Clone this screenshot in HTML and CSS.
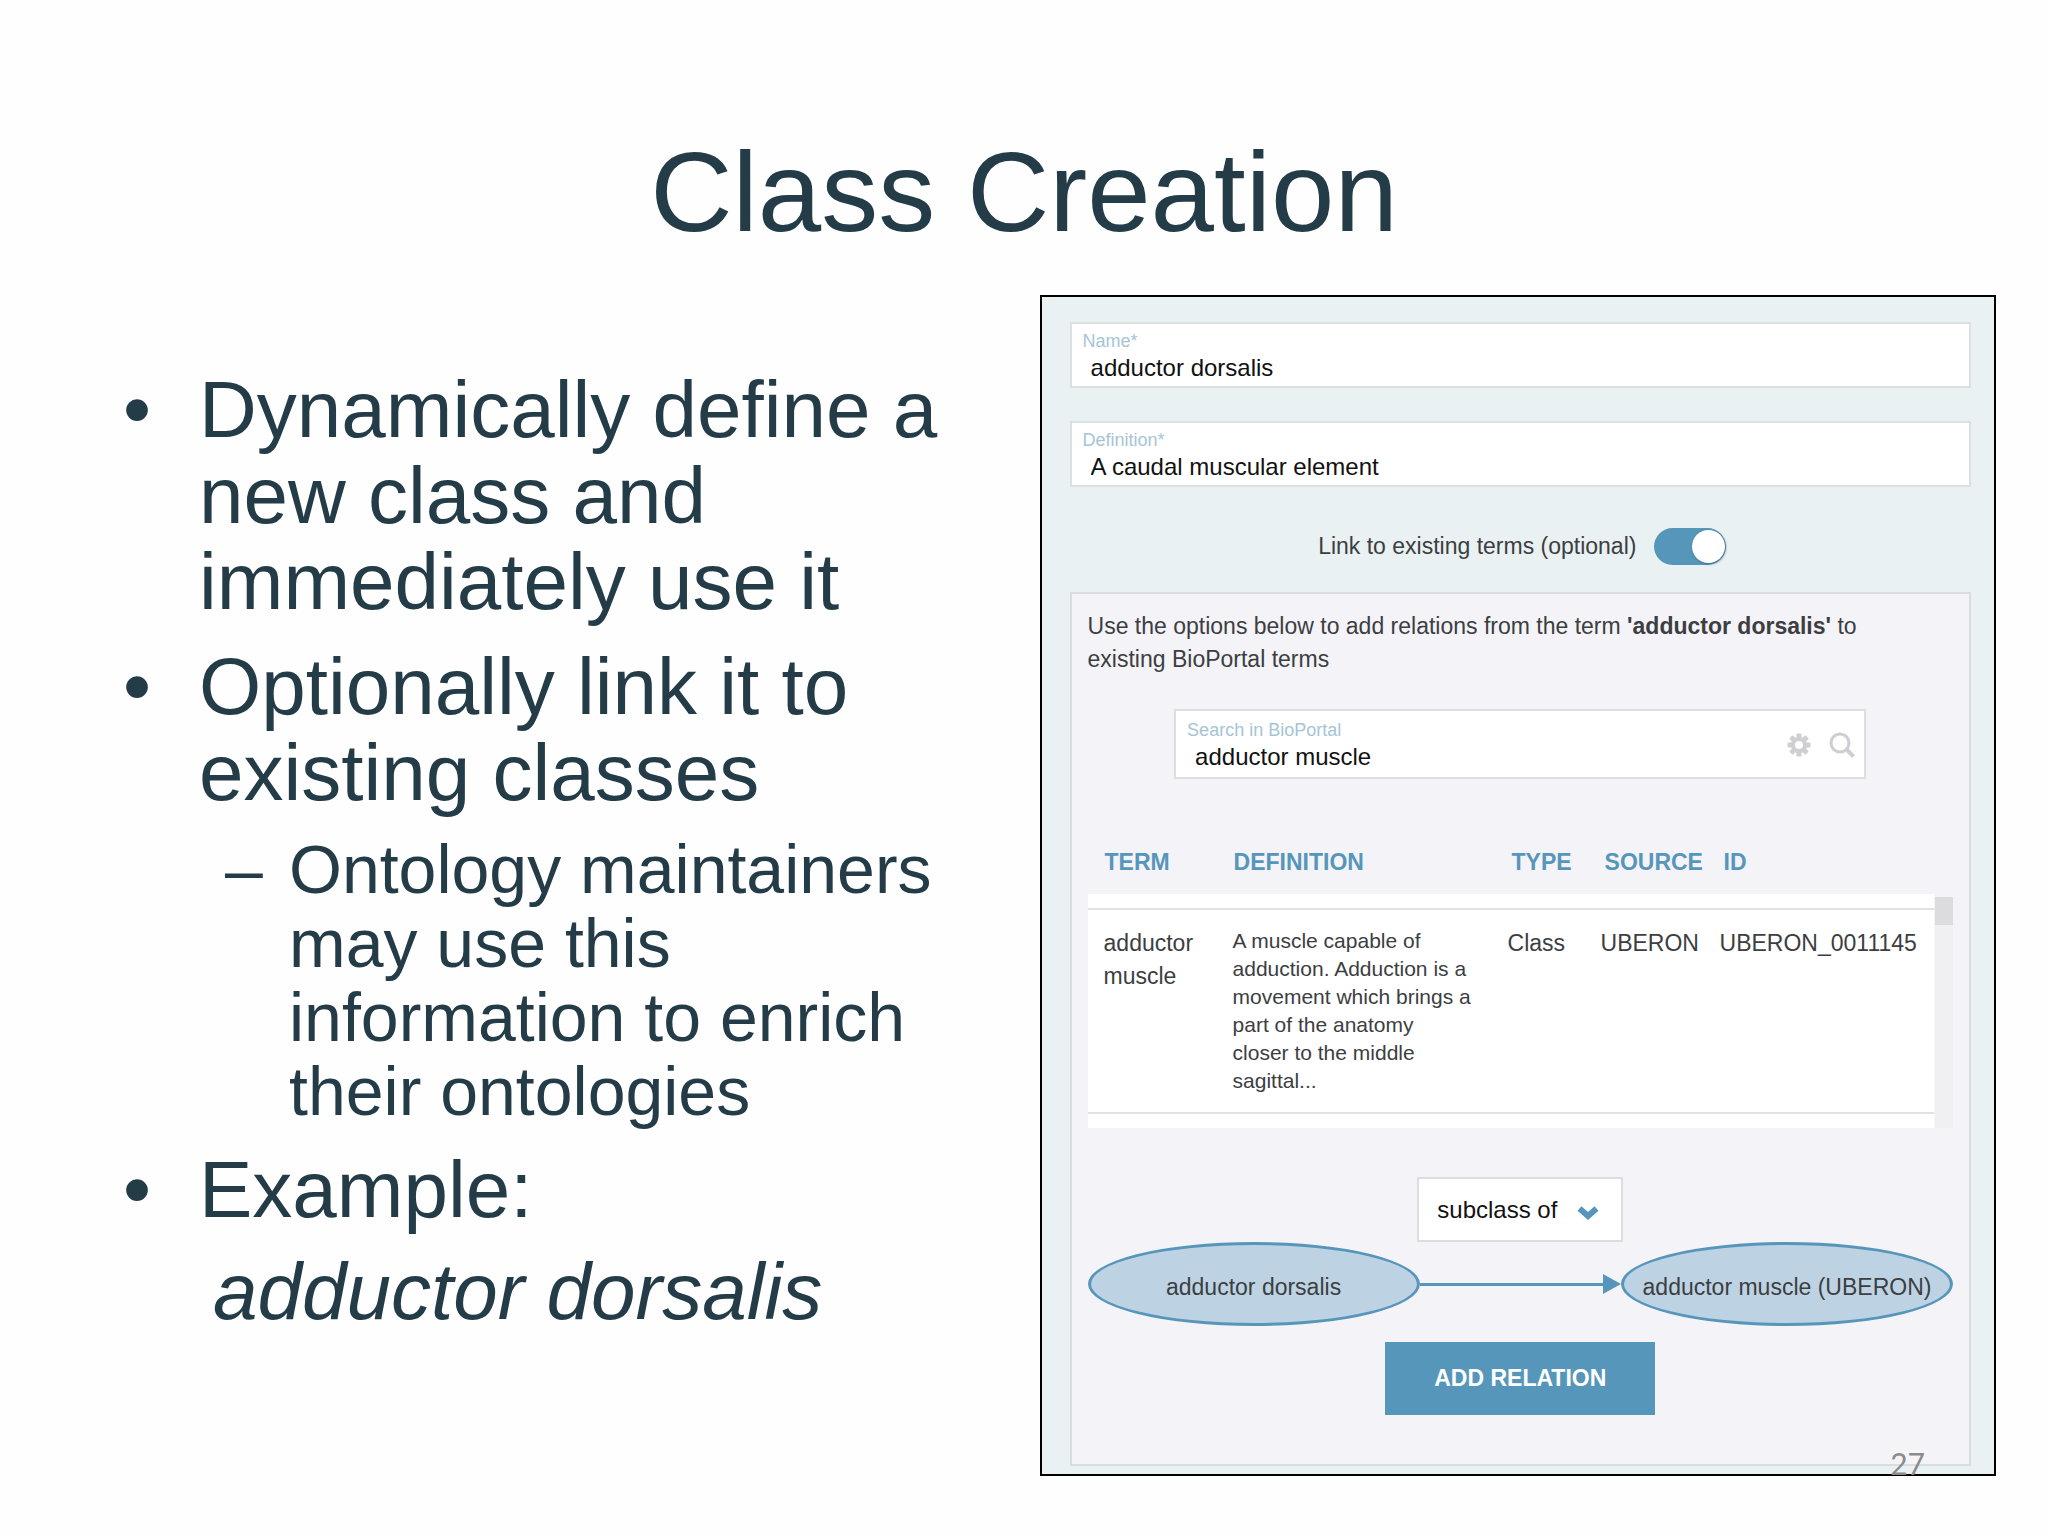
FILE: index.html
```
<!DOCTYPE html>
<html lang="en">
<head>
    <meta charset="UTF-8">
    <meta name="viewport" content="width=device-width, initial-scale=1.0">
    <title>Class Creation</title>
    <link rel="stylesheet" href="styles.css">
</head>
<body>
    <main class="slide">
        <h1>Class Creation</h1>

        <div class="columns">
            <!-- Bullet points -->
            <section class="points">
                <ul class="bullets">
                    <li>Dynamically define a new class and immediately use it</li>
                    <li>Optionally link it to existing classes
                        <ul class="dashes">
                            <li>Ontology maintainers may use this information to enrich their ontologies</li>
                        </ul>
                    </li>
                    <li>Example:</li>
                </ul>
                <p class="example"><em>adductor dorsalis</em></p>
            </section>

            <!-- Class form -->
            <form class="panel">
                <div class="field">
                    <label for="className">Name*</label>
                    <input type="text" id="className" value="adductor dorsalis">
                </div>
                <div class="field">
                    <label for="classDefinition">Definition*</label>
                    <input type="text" id="classDefinition" value="A caudal muscular element">
                </div>

                <div class="toggle-row">
                    <label for="linkTerms">Link to existing terms (optional)</label>
                    <input type="checkbox" id="linkTerms" class="toggle" checked>
                </div>

                <div class="relations">
                    <p>Use the options below to add relations from the term <strong>'adductor dorsalis'</strong> to existing BioPortal terms</p>

                    <div class="field search">
                        <div class="search-text">
                            <label for="bioportalSearch">Search in BioPortal</label>
                            <input type="text" id="bioportalSearch" value="adductor muscle">
                        </div>
                        <button type="button" class="icon-button" aria-label="Search settings">
                            <svg width="24" height="24" viewBox="0 0 24 24">
                                <g fill="#cfced3">
                                    <rect x="9.500" y="0.500" width="5" height="23" rx="1"/>
                                    <rect x="9.500" y="0.500" width="5" height="23" rx="1" transform="rotate(45 12 12)"/>
                                    <rect x="9.500" y="0.500" width="5" height="23" rx="1" transform="rotate(90 12 12)"/>
                                    <rect x="9.500" y="0.500" width="5" height="23" rx="1" transform="rotate(135 12 12)"/>
                                    <circle cx="12" cy="12" r="8"/>
                                </g>
                                <circle cx="12" cy="12" r="4" fill="#fff"/>
                            </svg>
                        </button>
                        <button type="button" class="icon-button" aria-label="Search">
                            <svg width="26" height="26" viewBox="0 0 26 26" fill="none" stroke="#cfced3">
                                <circle cx="11" cy="11" r="9" stroke-width="3"/>
                                <path d="M17 17L24.500 24.500" stroke-width="4"/>
                            </svg>
                        </button>
                    </div>

                    <div class="results">
                        <table>
                            <colgroup>
                                <col class="col-term">
                                <col class="col-definition">
                                <col class="col-type">
                                <col class="col-source">
                                <col>
                            </colgroup>
                            <thead>
                                <tr>
                                    <th>TERM</th>
                                    <th>DEFINITION</th>
                                    <th>TYPE</th>
                                    <th>SOURCE</th>
                                    <th>ID</th>
                                </tr>
                            </thead>
                            <tbody>
                                <tr class="edge"><td colspan="5"></td></tr>
                                <tr>
                                    <td>adductor muscle</td>
                                    <td class="definition">A muscle capable of adduction. Adduction is a movement which brings a part of the anatomy<br>closer to the middle<br>sagittal...</td>
                                    <td>Class</td>
                                    <td>UBERON</td>
                                    <td>UBERON_0011145</td>
                                </tr>
                                <tr class="edge"><td colspan="5"></td></tr>
                            </tbody>
                        </table>
                        <div class="scrollbar"><div class="thumb"></div></div>
                    </div>

                    <div class="relation-type">
                        <select aria-label="Relation type">
                            <option>subclass of</option>
                        </select>
                        <svg class="chevron" width="22" height="16" viewBox="0 0 22 16">
                            <path d="M2.500 3.500L11 11L19.500 3.500" fill="none" stroke="#5796bb" stroke-width="6"/>
                        </svg>
                    </div>

                    <div class="diagram">
                        <div class="node">adductor dorsalis</div>
                        <div class="arrow"></div>
                        <div class="node">adductor muscle (UBERON)</div>
                    </div>

                    <button type="button" class="button">ADD RELATION</button>
                </div>

                <span class="page-number">27</span>
            </form>
        </div>
    </main>
</body>
</html>
```

FILE: styles.css
```
* {
    margin: 0;
    padding: 0;
    box-sizing: border-box;
}

body {
    font-family: "Liberation Sans", Arial, sans-serif;
    background: #fefefe;
    color: #243c47;
}

.slide {
    padding: 127px 52px 60px 123px;
}

h1 {
    margin: 0 0 38px -71px;
    font-size: 114px;
    font-weight: normal;
    line-height: 130px;
    text-align: center;
}

.columns {
    display: grid;
    grid-template-columns: 46fr 48fr;
    align-items: start;
}

/* Bullet points */
.points {
    padding: 72px 72px 0 0;
    font-size: 80px;
    line-height: 86px;
}

.points ul {
    list-style: none;
}

.bullets {
    display: flex;
    flex-direction: column;
    gap: 19px;
}

.bullets > li {
    padding-left: 76px;
}

.bullets > li::before {
    content: "•";
    float: left;
    margin-left: -76px;
}

.dashes {
    margin-top: 16px;
    font-size: 68px;
    line-height: 74px;
}

.dashes li {
    padding-left: 90px;
}

.dashes li::before {
    content: "–";
    float: left;
    margin-left: -64px;
}

.example {
    margin-top: 16px;
    padding-left: 90px;
}

/* Form panel */
.panel {
    position: relative;
    padding: 25px 23px 8px 28px;
    border: 2px solid #000;
    background: #e9f1f2;
    color: #3c3e42;
    font-size: 23px;
    line-height: 33px;
}

.field {
    margin-bottom: 33px;
    padding: 7px 11px 1px;
    border: 2px solid #dbe1e2;
    background: #fff;
}

.field label {
    display: block;
    color: #a5c5d6;
    font-size: 18px;
    line-height: 20px;
}

.field input {
    display: block;
    width: 100%;
    height: 34px;
    padding-left: 8px;
    border: none;
    outline: none;
    background: transparent;
    color: #111;
    font-family: inherit;
    font-size: 24px;
}

.toggle-row {
    display: flex;
    justify-content: center;
    align-items: center;
    gap: 18px;
    margin: 41px 0 27px;
    padding-left: 4px;
}

.toggle {
    appearance: none;
    display: flex;
    justify-content: flex-end;
    width: 72px;
    height: 37px;
    padding: 2px 1px;
    border-radius: 19px;
    background: #5796bb;
}

.toggle::before {
    content: "";
    width: 33px;
    height: 33px;
    border-radius: 50%;
    background: #fff;
    box-shadow: 1px 1px 3px rgba(0, 0, 0, 0.3);
}

.relations {
    display: flex;
    flex-direction: column;
    align-items: center;
    padding: 16px 16px 49px;
    border: 2px solid #d8dde0;
    background: #f4f3f7;
}

.relations p {
    align-self: stretch;
    margin-bottom: 33px;
    padding-right: 60px;
}

.search {
    display: flex;
    align-items: center;
    gap: 18px;
    width: 80%;
    margin-bottom: 67px;
    padding: 9px 9px 3px 11px;
    border-color: #dddce0;
}

.search-text {
    flex: 1;
}

.icon-button {
    display: flex;
    padding-bottom: 4px;
    border: none;
    background: none;
    cursor: pointer;
}

/* Search results */
.results {
    display: flex;
    align-items: flex-end;
    align-self: stretch;
    gap: 1px;
    margin-bottom: 49px;
}

table {
    flex: 1;
    border-collapse: collapse;
    table-layout: fixed;
}

.col-term {
    width: 129px;
}

.col-definition {
    width: 275px;
}

.col-type {
    width: 93px;
}

.col-source {
    width: 119px;
}

th {
    padding: 0 0 15px 17px;
    color: #5796bb;
    text-align: left;
}

th:nth-child(n+3) {
    padding-left: 20px;
}

tbody {
    background: #fff;
}

td {
    padding: 17px 0 17px 16px;
    border-top: 2px solid #e2e1e6;
    border-bottom: 2px solid #e2e1e6;
    vertical-align: top;
}

td.definition {
    padding-right: 16px;
    font-size: 21px;
    line-height: 28px;
}

.edge td {
    height: 15px;
    padding: 0;
    border: none;
}

.scrollbar {
    width: 18px;
    height: 231px;
    background: #f0eff1;
}

.thumb {
    height: 28px;
    background: #dcdbdd;
}

/* Relation */
.relation-type {
    position: relative;
}

select {
    appearance: none;
    width: 206px;
    height: 65px;
    padding: 0 18px;
    border: 2px solid #dddce0;
    border-radius: 0;
    background: #fff;
    color: #111;
    font-family: inherit;
    font-size: 24px;
}

.chevron {
    position: absolute;
    top: 28px;
    right: 24px;
    pointer-events: none;
}

.diagram {
    display: flex;
    align-items: center;
    align-self: stretch;
    margin-bottom: 16px;
}

.node {
    display: flex;
    justify-content: center;
    align-items: center;
    width: 332px;
    height: 84px;
    padding-top: 6px;
    border: 3px solid #5796bb;
    border-radius: 50%;
    background: #bdd3e3;
    white-space: nowrap;
}

.arrow {
    display: flex;
    align-items: center;
    flex: 1;
}

.arrow::before {
    content: "";
    flex: 1;
    height: 3px;
    background: #5796bb;
}

.arrow::after {
    content: "";
    border-left: 18px solid #5796bb;
    border-top: 10px solid transparent;
    border-bottom: 10px solid transparent;
}

.button {
    width: 270px;
    height: 73px;
    border: none;
    background: #5796bb;
    color: #fff;
    font-family: inherit;
    font-size: 23px;
    font-weight: bold;
    cursor: pointer;
}

.page-number {
    position: absolute;
    right: 69px;
    bottom: -6px;
    color: #8b8b8b;
    font-family: Lato, sans-serif;
    font-size: 30px;
}
```
